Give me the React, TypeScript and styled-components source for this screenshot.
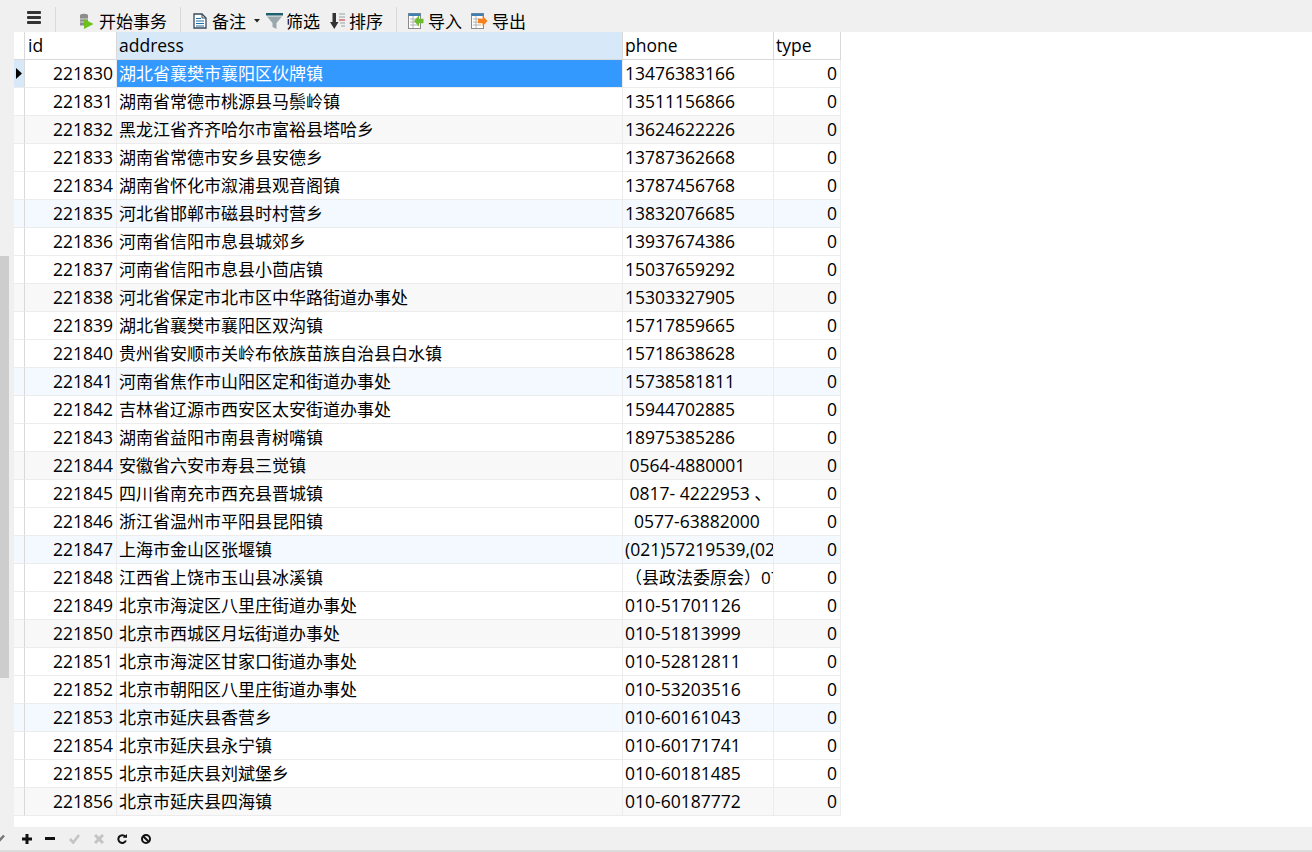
import React from "react";
import styled, { createGlobalStyle } from "styled-components";

const Global = createGlobalStyle`
  html, body { margin: 0; padding: 0; background: #f0f0f0; }
  #root { height: 100vh; }
`;

const FONT = `"Open Sans", "Noto Sans CJK SC", sans-serif`;

const Page = styled.div`
  height: 852px;
  display: flex;
  flex-direction: column;
  overflow: hidden;
  font-family: ${FONT};
  color: #000;
  background: #f0f0f0;
`;

const Toolbar = styled.div`
  height: 32px;
  flex: none;
  display: flex;
  align-items: flex-end;
  background: #f0f0f0;
  overflow: hidden;
`;

const MenuButton = styled.div`
  height: 32px;
  margin-left: 27px;
  padding-top: 11px;
  box-sizing: border-box;
  svg { display: block; }
`;

const ToolButton = styled.div<{ $ml: number; $gap: number }>`
  display: flex;
  align-items: center;
  height: 32px;
  margin-left: ${(p) => p.$ml}px;
  gap: ${(p) => p.$gap}px;
  font-size: 17px;
  white-space: nowrap;
  padding-top: 10px;
  box-sizing: border-box;
  svg { flex: none; display: block; }
`;

const ToolText = styled.span`
  display: block;
  line-height: 20px;
  padding-top: 2px;
`;

const Divider = styled.div<{ $ml: number }>`
  width: 1px;
  height: 25px;
  flex: none;
  margin-left: ${(p) => p.$ml}px;
  background: #d9d9d9;
`;

const Middle = styled.div`
  flex: 1;
  min-height: 0;
  display: flex;
`;

const Gutter = styled.div`
  width: 14px;
  flex: none;
  padding-top: 224px;
  box-sizing: border-box;
  background: #f0f0f0;
`;

const Thumb = styled.div`
  width: 9px;
  height: 422px;
  background: #cdcdcd;
`;

const GridArea = styled.div`
  flex: 1;
  background: #fff;
  overflow: hidden;
`;

const Grid = styled.div`
  display: grid;
  width: 827px;
  grid-template-columns: 11px 92px 506px 151px 67px;
  grid-auto-rows: 28px;
`;

const Cell = styled.div<{ $bg?: string; $right?: boolean; $color?: string; $size?: number; $pl?: number }>`
  box-sizing: border-box;
  height: 28px;
  padding: 0 ${(p) => (p.$right ? 3 : 2)}px 0 ${(p) => p.$pl ?? 2}px;
  border-right: 1px solid #ececec;
  border-bottom: 1px solid #ececec;
  background: ${(p) => p.$bg ?? "transparent"};
  color: ${(p) => p.$color ?? "#000"};
  font-size: ${(p) => p.$size ?? 17.5}px;
  line-height: 27px;
  text-align: ${(p) => (p.$right ? "right" : "left")};
  white-space: pre;
  overflow: hidden;
`;

const HeadCell = styled(Cell)`
  border-right-color: #d9d9d9;
  border-bottom-color: #d9d9d9;
  background: ${(p) => p.$bg ?? "#fff"};
`;

const Indicator = styled(Cell)`
  padding: 0;
  display: flex;
  align-items: center;
  justify-content: center;
  border-right-color: #d9d9d9;
`;

const Footer = styled.div`
  height: 25px;
  flex: none;
  box-sizing: border-box;
  display: flex;
  align-items: center;
  background: #f0f0f0;
  border-bottom: 2px solid #dcdcdc;
  overflow: hidden;
`;

const FootIcon = styled.svg<{ $ml: number }>`
  flex: none;
  display: block;
  margin-left: ${(p) => p.$ml}px;
`;

const rows: [string, string, string][] = [
  ["221830", "湖北省襄樊市襄阳区伙牌镇", "13476383166"],
  ["221831", "湖南省常德市桃源县马鬃岭镇", "13511156866"],
  ["221832", "黑龙江省齐齐哈尔市富裕县塔哈乡", "13624622226"],
  ["221833", "湖南省常德市安乡县安德乡", "13787362668"],
  ["221834", "湖南省怀化市溆浦县观音阁镇", "13787456768"],
  ["221835", "河北省邯郸市磁县时村营乡", "13832076685"],
  ["221836", "河南省信阳市息县城郊乡", "13937674386"],
  ["221837", "河南省信阳市息县小茴店镇", "15037659292"],
  ["221838", "河北省保定市北市区中华路街道办事处", "15303327905"],
  ["221839", "湖北省襄樊市襄阳区双沟镇", "15717859665"],
  ["221840", "贵州省安顺市关岭布依族苗族自治县白水镇", "15718638628"],
  ["221841", "河南省焦作市山阳区定和街道办事处", "15738581811"],
  ["221842", "吉林省辽源市西安区太安街道办事处", "15944702885"],
  ["221843", "湖南省益阳市南县青树嘴镇", "18975385286"],
  ["221844", "安徽省六安市寿县三觉镇", " 0564-4880001"],
  ["221845", "四川省南充市西充县晋城镇", " 0817- 4222953 、"],
  ["221846", "浙江省温州市平阳县昆阳镇", "  0577-63882000"],
  ["221847", "上海市金山区张堰镇", "(021)57219539,(02"],
  ["221848", "江西省上饶市玉山县冰溪镇", "（县政法委原会）07"],
  ["221849", "北京市海淀区八里庄街道办事处", "010-51701126"],
  ["221850", "北京市西城区月坛街道办事处", "010-51813999"],
  ["221851", "北京市海淀区甘家口街道办事处", "010-52812811"],
  ["221852", "北京市朝阳区八里庄街道办事处", "010-53203516"],
  ["221853", "北京市延庆县香营乡", "010-60161043"],
  ["221854", "北京市延庆县永宁镇", "010-60171741"],
  ["221855", "北京市延庆县刘斌堡乡", "010-60181485"],
  ["221856", "北京市延庆县四海镇", "010-60187772"],
];

const stripe = (i: number): string | undefined => {
  if (i % 3 !== 2) return undefined;
  return (i - 2) % 6 === 0 ? "#f8f8f8" : "#f3f9ff";
};

const MenuIcon = () => (
  <svg width="14" height="13" viewBox="0 0 14 13">
    <rect x="0" y="0" width="14" height="3" rx="1" fill="#333" />
    <rect x="0" y="5" width="14" height="3" rx="1" fill="#333" />
    <rect x="0" y="10" width="14" height="3" rx="1" fill="#333" />
  </svg>
);

const StartIcon = () => (
  <svg width="15" height="16" viewBox="0 0 15 16">
    <ellipse cx="5" cy="2.5" rx="4" ry="1.8" fill="#8c8c8c" />
    <rect x="1" y="2.5" width="8" height="10" fill="#8c8c8c" />
    <path d="M1 6h8M1 9h8" stroke="#d8d8d8" strokeWidth="1" />
    <path d="M5 6L14.5 11L5 16Z" fill="#6cc21a" />
  </svg>
);

const NoteIcon = () => (
  <svg width="14" height="16" viewBox="0 0 14 16">
    <path d="M1 1h8l4 4v10H1Z" fill="#fff" stroke="#34495e" strokeWidth="1.3" />
    <path d="M9 1v4h4" fill="none" stroke="#34495e" strokeWidth="1" />
    <path d="M3 5.500h5M3 8h8M3 10.500h8M3 13h8" stroke="#1f6fa8" strokeWidth="1.2" />
  </svg>
);

const Caret = () => (
  <svg width="6" height="4" viewBox="0 0 6 4">
    <path d="M0 0h6L3 3.500Z" fill="#222" />
  </svg>
);

const FilterIcon = () => (
  <svg width="17" height="16" viewBox="0 0 17 16">
    <rect x="0" y="0" width="17" height="2.500" fill="#1f5f6e" />
    <path d="M1 3.500h15L10.500 10v6L6.500 14V10Z" fill="#9aa8ab" />
  </svg>
);

const SortIcon = () => (
  <svg width="16" height="16" viewBox="0 0 16 16">
    <path d="M2.500 0h3.500v9h2.500l-4.200 7L0 9h2.500Z" fill="#333" />
    <path d="M9 1h6M9 4h6" stroke="#8fa89a" strokeWidth="1.200" />
    <path d="M9 7h6" stroke="#d64550" strokeWidth="1.200" />
    <path d="M10 10h5M11 13h4" stroke="#8fa89a" strokeWidth="1.200" />
  </svg>
);

const FileBase = () => (
  <>
    <rect x="0.500" y="0.500" width="12" height="15" fill="#fff" stroke="#8a8a8a" />
    <rect x="0.500" y="0.500" width="12" height="2.500" fill="#3f7fb5" />
    <path d="M2 6h8M2 9h8M2 12h8M5 3v12" stroke="#aaa" strokeWidth="0.900" />
  </>
);

const ImportIcon = () => (
  <svg width="16" height="16" viewBox="0 0 16 16">
    <FileBase />
    <path d="M6 8l5-5.500v3.300h4.500v4.400H11V13.500Z" fill="#6cbb2a" />
  </svg>
);

const ExportIcon = () => (
  <svg width="17" height="16" viewBox="0 0 17 16">
    <FileBase />
    <path d="M16.500 8l-5-5.500v3.300H7v4.400h4.500V13.500Z" fill="#f5821f" />
  </svg>
);

const Triangle = () => (
  <svg width="6" height="11" viewBox="0 0 6 11">
    <path d="M0 0L6 5.500L0 11Z" fill="#000" />
  </svg>
);

export default function App() {
  return (
    <Page>
      <Global />
      <Toolbar>
        <MenuButton><MenuIcon /></MenuButton>
        <Divider $ml={14} />
        <ToolButton $ml={23} $gap={5}><StartIcon /><ToolText>开始事务</ToolText></ToolButton>
        <Divider $ml={13} />
        <ToolButton $ml={12} $gap={5}><NoteIcon /><ToolText>备注</ToolText></ToolButton>
        <ToolButton $ml={8} $gap={0}><Caret /></ToolButton>
        <ToolButton $ml={6} $gap={3}><FilterIcon /><ToolText>筛选</ToolText></ToolButton>
        <ToolButton $ml={10} $gap={3}><SortIcon /><ToolText>排序</ToolText></ToolButton>
        <Divider $ml={13} />
        <ToolButton $ml={11} $gap={4}><ImportIcon /><ToolText>导入</ToolText></ToolButton>
        <ToolButton $ml={9} $gap={4}><ExportIcon /><ToolText>导出</ToolText></ToolButton>
      </Toolbar>
      <Middle>
        <Gutter><Thumb /></Gutter>
        <GridArea>
          <Grid>
            <HeadCell />
            <HeadCell $pl={3}>id</HeadCell>
            <HeadCell $bg="#d7e8f8">address</HeadCell>
            <HeadCell>phone</HeadCell>
            <HeadCell>type</HeadCell>
            {rows.map((r, i) => {
              const bg = stripe(i);
              return (
                <React.Fragment key={r[0]}>
                  <Indicator $bg={i === 0 ? "#d7e8f8" : bg}>{i === 0 && <Triangle />}</Indicator>
                  <Cell $bg={bg} $right>{r[0]}</Cell>
                  <Cell $bg={i === 0 ? "#3399ff" : bg} $color={i === 0 ? "#fff" : "#000"} $size={17}>{r[1]}</Cell>
                  <Cell $bg={bg} $size={r[2].startsWith("（") ? 17 : 17.5}>{r[2]}</Cell>
                  <Cell $bg={bg} $right>0</Cell>
                </React.Fragment>
              );
            })}
          </Grid>
        </GridArea>
      </Middle>
      <Footer>
        <FootIcon $ml={-7} width="12" height="10" viewBox="0 0 12 10"><path d="M1 5l3.500 3.500L11 1.500" fill="none" stroke="#777" strokeWidth="2.500" /></FootIcon>
        <FootIcon $ml={17} width="10" height="10" viewBox="0 0 10 10"><path d="M3.500 0h3v3.500H10v3H6.500V10h-3V6.500H0v-3h3.500Z" fill="#111" /></FootIcon>
        <FootIcon $ml={13} width="10" height="3" viewBox="0 0 10 3"><rect width="10" height="3" fill="#111" /></FootIcon>
        <FootIcon $ml={14} width="11" height="10" viewBox="0 0 11 10"><path d="M1 5l3.200 3.500L10 1" fill="none" stroke="#c4c4c4" strokeWidth="2.600" /></FootIcon>
        <FootIcon $ml={14} width="10" height="10" viewBox="0 0 10 10"><path d="M1 1l8 8M9 1l-8 8" stroke="#c4c4c4" strokeWidth="3" /></FootIcon>
        <FootIcon $ml={13} width="10" height="10" viewBox="0 0 10 10"><path d="M8.300 2.600A3.900 3.900 0 1 0 8.900 6.500" fill="none" stroke="#111" strokeWidth="2" /><path d="M5.800 3.800h4.200V0Z" fill="#111" /></FootIcon>
        <FootIcon $ml={14} width="10" height="10" viewBox="0 0 10 10"><circle cx="5" cy="5" r="4" fill="none" stroke="#111" strokeWidth="2" /><path d="M2.200 2.200l5.600 5.600" stroke="#111" strokeWidth="2" /></FootIcon>
      </Footer>
    </Page>
  );
}
